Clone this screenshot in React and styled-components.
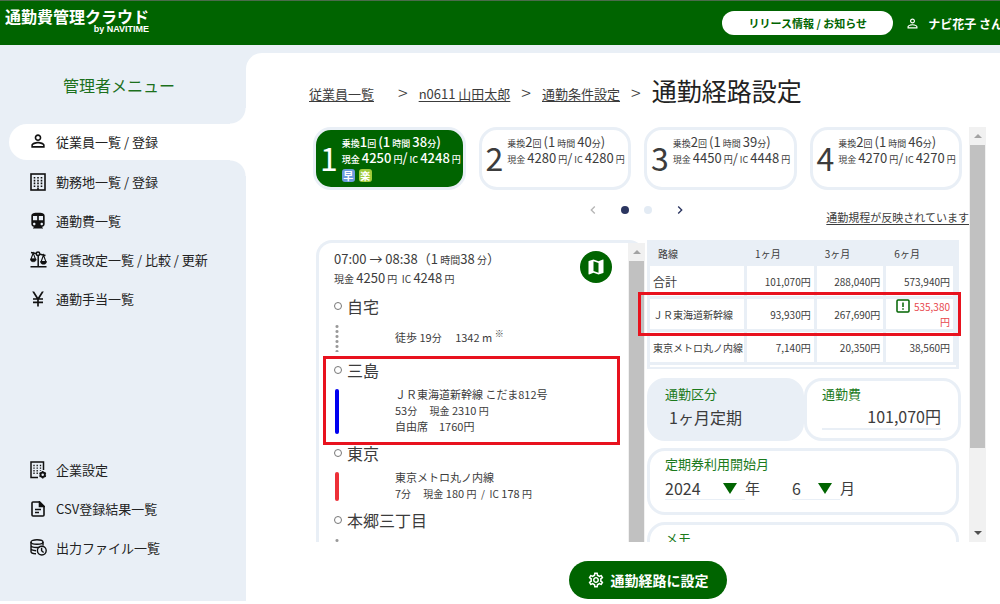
import styled, { createGlobalStyle, css } from 'styled-components';
import {
	MdPersonOutline,
	MdDirectionsTransit,
	MdCurrencyYen,
	MdMap,
	MdOutlineSettings,
	MdChevronLeft,
	MdChevronRight,
} from 'react-icons/md';

const routes = [
	{ no: 1, transfer: 1, minute: 38, cash: 4250, ic: 4248, tags: ['早', '楽'] },
	{ no: 2, transfer: 2, minute: 40, cash: 4280, ic: 4280, tags: [] },
	{ no: 3, transfer: 2, minute: 39, cash: 4450, ic: 4448, tags: [] },
	{ no: 4, transfer: 2, minute: 46, cash: 4270, ic: 4270, tags: [] },
];

function BuildingIcon() {
	return (
		<svg width="16" height="18" viewBox="0 0 16 18" fill="none" stroke="#111">
			<rect x="1" y="1" width="14" height="16" strokeWidth="1.6" />
			<path d="M4.5 4v10M8 4v10M11.5 4v10" strokeWidth="1.6" strokeDasharray="1.6 1.2" />
			<path d="M8 14.5V17" strokeWidth="1.6" />
		</svg>
	);
}

// 左の皿が上がった天びん
function ScaleIcon() {
	return (
		<svg width="17" height="17" viewBox="0 0 17 17" fill="none" stroke="#111" strokeWidth="1.5">
			<path d="M1 1.600l5 1M10 3.200l5.500 1.200M8.200 4.500V15.500M.5 15.800h16" />
			<circle cx="8" cy="2.800" r="1.700" />
			<path d="M3.200 2L1 8h4.400L3.200 2zM13.500 4l-2.300 6.500h4.600L13.500 4z" strokeWidth="1.100" />
			<path d="M.4 8h5.800c0 2-1.300 2.800-2.900 2.800S.4 10 .4 8zM10.400 10.500h6.200c0 2-1.500 2.800-3.100 2.800s-3.100-.8-3.100-2.800z" fill="#111" strokeWidth="0.500" />
		</svg>
	);
}

function CompanyIcon() {
	return (
		<svg width="17" height="18" viewBox="0 0 17 18" fill="none" stroke="#111">
			<path d="M8 16.500H1V1h12.500v8" strokeWidth="1.500" />
			<path d="M4 3.800v10M7.200 3.800v10M10.500 3.800v6" strokeWidth="1.300" strokeDasharray="1.400 1.200" />
			<circle cx="12.700" cy="13.700" r="2.200" strokeWidth="1.900" />
			<path d="M12.700 10v1.400M12.700 16v1.400M9.500 11.900l1.200.7M14.700 14.800l1.200.7M9.500 15.500l1.200-.7M14.700 12.600l1.200-.7" strokeWidth="1.500" />
		</svg>
	);
}

function FileIcon() {
	return (
		<svg width="14" height="16" viewBox="0 0 14 16" fill="none" stroke="#111" strokeWidth="1.600">
			<path d="M2 1h6.500L13 5.500V14a1 1 0 0 1-1 1H2a1 1 0 0 1-1-1V2a1 1 0 0 1 1-1z" />
			<path d="M8.500 1v4.500H13z" fill="#111" />
			<path d="M4 8.500h6M4 11.500h4" strokeWidth="1.300" />
		</svg>
	);
}

function DataIcon() {
	return (
		<svg width="17" height="17" viewBox="0 0 17 17" fill="none" stroke="#111" strokeWidth="1.400">
			<ellipse cx="7" cy="3" rx="6" ry="2.200" />
			<path d="M1 3v9.500c0 1.200 2.200 2.200 5 2.300M13 3v3.500M1 6.300c0 1.200 2.700 2.200 6 2.200 1.500 0 2-.1 2.600-.3M1 9.600c0 1.200 2 2 5 2.200" />
			<circle cx="11.800" cy="11.600" r="4.400" />
			<path d="M11.600 8.800v3l2 1.800" />
		</svg>
	);
}

function WarningIcon() {
	return (
		<svg width="14" height="14" viewBox="0 0 14 14" fill="none" stroke="#006400">
			<rect x="1" y="1" width="12" height="12" rx="1" strokeWidth="1.500" />
			<path d="M7 3.500v4.500M7 9.200v1.500" strokeWidth="1.500" />
		</svg>
	);
}

const mainMenu = [
	{ label: '従業員一覧 / 登録', icon: <MdPersonOutline size={20} />, active: true },
	{ label: '勤務地一覧 / 登録', icon: <BuildingIcon /> },
	{ label: '通勤費一覧', icon: <MdDirectionsTransit size={20} /> },
	{ label: '運賃改定一覧 / 比較 / 更新', icon: <ScaleIcon /> },
	{ label: '通勤手当一覧', icon: <MdCurrencyYen size={20} /> },
];

const subMenu = [
	{ label: '企業設定', icon: <CompanyIcon /> },
	{ label: 'CSV登録結果一覧', icon: <FileIcon /> },
	{ label: '出力ファイル一覧', icon: <DataIcon /> },
];

function Menu({ items }) {
	return (
		<MenuList>
			{items.map((item) => (
				<MenuItem key={item.label} $active={item.active}>
					<MenuLink href="#">
						<MenuIcon>{item.icon}</MenuIcon>
						{item.label}
					</MenuLink>
				</MenuItem>
			))}
		</MenuList>
	);
}

function RouteCard({ route, selected }) {
	return (
		<RouteButton type="button" $selected={selected}>
			<RouteNumber>{route.no}</RouteNumber>
			<RouteText>
				<RouteLine>
					乗換<Num>{route.transfer}</Num>回 <Num>(1</Num> 時間 <Num>{route.minute}</Num>分<Num>)</Num>
				</RouteLine>
				<RouteLine>
					現金 <Num>{route.cash}</Num> 円<Num>/</Num> IC <Num>{route.ic}</Num> 円
				</RouteLine>
				<TagRow>
					{route.tags.map((tag) => (
						<Tag key={tag} $easy={tag === '楽'}>
							{tag}
						</Tag>
					))}
				</TagRow>
			</RouteText>
		</RouteButton>
	);
}

function Scrollbar({ full }) {
	return (
		<ScrollTrack>
			<ScrollArrow />
			<ScrollThumb $full={full} />
			{full ? null : <ScrollArrow $down />}
		</ScrollTrack>
	);
}

function Itinerary() {
	return (
		<RoutePanel>
			<RouteBody>
				<RouteHead>
					<div>
						<HeadLine>
							<Num>07:00 → 08:38（1</Num> 時間<Num>38</Num> 分<Num>）</Num>
						</HeadLine>
						<HeadLine>
							現金 <Num>4250</Num> 円&nbsp; IC <Num>4248</Num> 円
						</HeadLine>
					</div>
					<MapButton type="button" aria-label="地図">
						<MdMap size={20} />
					</MapButton>
				</RouteHead>

				<Leg>
					<Station>自宅</Station>
					<Segment $height={40}>
						<WalkBar />
						<div>
							徒歩 19<Small>分</Small>　 1342 m <sup>※</sup>
						</div>
					</Segment>
				</Leg>
				<Leg $marked>
					<Station>三島</Station>
					<Segment $height={59}>
						<LineBar $color="#0000f0" />
						<div>
							<div>ＪＲ東海道新幹線 こだま812号</div>
							<div>
								53<Small>分　 現金</Small> 2310 <Small>円</Small>
							</div>
							<div>自由席　1760円</div>
						</div>
					</Segment>
				</Leg>
				<Leg>
					<Station>東京</Station>
					<Segment $height={43}>
						<LineBar $color="#ed3038" />
						<div>
							<div>東京メトロ丸ノ内線</div>
							<div>
								7<Small>分　 現金</Small> 180 <Small>円 &nbsp;/ &nbsp;IC</Small> 178 <Small>円</Small>
							</div>
						</div>
					</Segment>
				</Leg>
				<Leg>
					<Station>本郷三丁目</Station>
					<Segment $height={40}>
						<WalkBar />
					</Segment>
				</Leg>
			</RouteBody>
			<Scrollbar full />
		</RoutePanel>
	);
}

function FareTable() {
	return (
		<TableBox>
			<Table>
				<thead>
					<tr>
						<HeadCell $first>路線</HeadCell>
						<HeadCell>1ヶ月</HeadCell>
						<HeadCell>3ヶ月</HeadCell>
						<HeadCell>6ヶ月</HeadCell>
					</tr>
				</thead>
				<tbody>
					<tr>
						<NameCell $total>合計</NameCell>
						<Cell>101,070円</Cell>
						<Cell>288,040円</Cell>
						<Cell>573,940円</Cell>
					</tr>
					<MarkedRow>
						<NameCell>
							ＪＲ東海道新幹線
							<RowMark />
						</NameCell>
						<Cell>93,930円</Cell>
						<Cell>267,690円</Cell>
						<Cell>
							<Alert>
								<WarningIcon />
								<span>
									535,380
									<br />円
								</span>
							</Alert>
						</Cell>
					</MarkedRow>
					<tr>
						<NameCell>東京メトロ丸ノ内線</NameCell>
						<Cell>7,140円</Cell>
						<Cell>20,350円</Cell>
						<Cell>38,560円</Cell>
					</tr>
				</tbody>
			</Table>
			<TableEnd />
		</TableBox>
	);
}

export default function App() {
	return (
		<Page>
			<GlobalStyle />
			<Header>
				<Logo href="#">
					通勤費管理クラウド
					<LogoSub>by NAVITIME</LogoSub>
				</Logo>
				<HeaderRight>
					<NewsButton type="button">リリース情報 / お知らせ</NewsButton>
					<User>
						<MdPersonOutline size={15} />
						ナビ花子 さん
					</User>
				</HeaderRight>
			</Header>

			<Body>
				<Sidebar>
					<SideTitle>管理者メニュー</SideTitle>
					<Menu items={mainMenu} />
					<Menu items={subMenu} />
				</Sidebar>

				<Main>
					<Breadcrumb>
						<Crumb href="#" $wide>
							従業員一覧
						</Crumb>
						<Arrow>&gt;</Arrow>
						<Crumb href="#">n0611 山田太郎</Crumb>
						<Arrow>&gt;</Arrow>
						<Crumb href="#">通勤条件設定</Crumb>
						<Arrow>&gt;</Arrow>
						<Title>通勤経路設定</Title>
					</Breadcrumb>

					<ScrollArea>
						<ScrollContent>
							<RouteList>
								{routes.map((route) => (
									<RouteCard key={route.no} route={route} selected={route.no === 1} />
								))}
							</RouteList>
							<PagerRow>
								<Pager>
									<PagerButton type="button" aria-label="前へ" $disabled>
										<MdChevronLeft size={16} />
									</PagerButton>
									<Dots>
										<Dot $on />
										<Dot />
									</Dots>
									<PagerButton type="button" aria-label="次へ">
										<MdChevronRight size={16} />
									</PagerButton>
								</Pager>
								<RuleLink href="#">通勤規程が反映されています</RuleLink>
							</PagerRow>

							<Columns>
								<Itinerary />
								<Side>
									<FareTable />
									<Pair>
										<Box $filled>
											<Label>通勤区分</Label>
											<Value>1ヶ月定期</Value>
										</Box>
										<Box>
											<Label as="label" htmlFor="fare">
												通勤費
											</Label>
											<FareInput id="fare" defaultValue="101,070円" />
										</Box>
									</Pair>
									<Box $wide>
										<Label>定期券利用開始月</Label>
										<DateRow>
											<SelectWrap $width={80}>
												<Select id="year" defaultValue="2024">
													<option>2024</option>
													<option>2025</option>
												</Select>
											</SelectWrap>
											<DateUnit htmlFor="year" $year>
												年
											</DateUnit>
											<SelectWrap $width={48}>
												<Select id="month" defaultValue="6">
													<option>6</option>
													<option>7</option>
												</Select>
											</SelectWrap>
											<DateUnit htmlFor="month">月</DateUnit>
										</DateRow>
									</Box>
									<Box $wide>
										<Label as="label" htmlFor="memo">
											メモ
										</Label>
										<Memo id="memo" />
									</Box>
								</Side>
							</Columns>
						</ScrollContent>
						<Scrollbar />
					</ScrollArea>

					<Footer>
						<SubmitButton type="button">
							<MdOutlineSettings size={18} />
							通勤経路に設定
						</SubmitButton>
					</Footer>
				</Main>
			</Body>
		</Page>
	);
}

const GlobalStyle = createGlobalStyle`
	:root {
		--green: #006400;
		--pale: #e9eff6;
		--text: #3c3c3c;
	}
	* {
		box-sizing: border-box;
	}
	body {
		margin: 0;
		color: #222;
		font-family: 'Noto Sans CJK JP', sans-serif;
		font-size: 13px;
		overflow: hidden;
	}
	button, input, select, textarea {
		font-family: inherit;
		color: inherit;
	}
	a {
		color: inherit;
	}
	svg {
		flex-shrink: 0;
	}
`;

const Page = styled.div`
	display: flex;
	flex-direction: column;
	height: 100vh;
	padding-bottom: 3px;
	background-color: white;
`;

const Header = styled.header`
	display: flex;
	justify-content: space-between;
	height: 45px;
	flex-shrink: 0;
	padding-left: 5px;
	border-top: 1px solid #4b6b4b;
	background-color: var(--green);
	color: white;
	overflow: hidden;
`;

const Logo = styled.a`
	display: flex;
	flex-direction: column;
	padding-top: 5px;
	font-size: 16px;
	font-weight: 700;
	line-height: 20px;
	text-decoration: none;
`;

const LogoSub = styled.span`
	align-self: flex-end;
	font-family: 'Liberation Sans', sans-serif;
	font-size: 9px;
	line-height: 6px;
`;

const HeaderRight = styled.div`
	display: flex;
	align-items: center;
	gap: 12px;
	margin-right: -3px;
`;

const NewsButton = styled.button`
	width: 171px;
	height: 24px;
	padding: 0;
	border: none;
	border-radius: 12px;
	background-color: white;
	color: var(--green);
	font-size: 11px;
	font-weight: 700;
`;

const User = styled.div`
	display: flex;
	align-items: center;
	gap: 8px;
	font-size: 12px;
	font-weight: 700;
	white-space: nowrap;
`;

const Body = styled.div`
	display: flex;
	flex: 1;
	min-height: 0;
	background-color: var(--pale);
`;

const Sidebar = styled.nav`
	display: flex;
	flex-direction: column;
	justify-content: space-between;
	width: 246px;
	flex-shrink: 0;
	padding-bottom: 33px;
`;

const SideTitle = styled.h2`
	margin: 28px 0 27px;
	padding-right: 8px;
	color: #1c701c;
	font-size: 16px;
	font-weight: 400;
	line-height: 24px;
	text-align: center;
`;

const MenuList = styled.ul`
	margin: 0;
	padding: 0 0 0 9px;
	list-style: none;

	&:last-child {
		margin-top: auto;
	}
`;

const MenuItem = styled.li`
	display: flex;
	height: 39px;
	${(props) =>
		props.$active
			? css`
					position: relative;
					height: 36px;
					margin-bottom: 3px;
					border-radius: 18px 0 0 18px;
					background-color: white;
					&::before,
					&::after {
						content: '';
						position: absolute;
						right: 0;
						width: 16px;
						height: 16px;
					}
					&::before {
						bottom: 100%;
						background: radial-gradient(circle at 0 0, transparent 15px, white 16px);
					}
					&::after {
						top: 100%;
						background: radial-gradient(circle at 0 100%, transparent 15px, white 16px);
					}
			  `
			: null}
`;

const MenuLink = styled.a`
	display: flex;
	align-items: center;
	flex: 1;
	gap: 8px;
	padding: 0 0 2px 19px;
	text-decoration: none;
`;

const MenuIcon = styled.span`
	display: flex;
	justify-content: center;
	width: 20px;
	color: #111;
`;

const Main = styled.main`
	display: flex;
	flex-direction: column;
	flex: 1;
	min-width: 0;
	margin-top: 8px;
	padding: 0 14px 0 63px;
	border-top-left-radius: 16px;
	background-color: white;
`;

const Breadcrumb = styled.nav`
	display: flex;
	align-items: center;
	gap: 11px;
	height: 74px;
	flex-shrink: 0;
`;

const Crumb = styled.a`
	margin-right: ${(props) => (props.$wide ? '13px' : '0')};
	padding-top: 6px;
	color: var(--text);
	text-underline-offset: 2px;
	white-space: nowrap;
`;

const Arrow = styled.span`
	padding-top: 4px;
	color: var(--text);
	font-size: 18px;
	font-weight: 300;
`;

const Title = styled.h1`
	margin: 0;
	font-size: 25px;
	font-weight: 400;
	line-height: 36px;
	white-space: nowrap;
`;

const ScrollArea = styled.div`
	display: flex;
	flex: 1;
	min-height: 0;
	overflow: hidden;
`;

const ScrollContent = styled.div`
	flex: 1;
	min-width: 0;
	padding-left: 4px;
`;

const ScrollTrack = styled.div`
	display: flex;
	flex-direction: column;
	width: 17px;
	flex-shrink: 0;
	background-color: #f1f1f1;
`;

const ScrollArrow = styled.div`
	display: flex;
	justify-content: center;
	align-items: center;
	height: 18px;
	flex-shrink: 0;
	margin-top: ${(props) => (props.$down ? 'auto' : '0')};

	&::before {
		content: '';
		border: 4px solid transparent;
		${(props) =>
			props.$down
				? css`
						border-top-color: #505050;
						border-bottom: none;
				  `
				: css`
						border-bottom-color: #a3a3a3;
						border-top: none;
				  `}
	}
`;

const ScrollThumb = styled.div`
	height: ${(props) => (props.$full ? 'auto' : '73%')};
	flex: ${(props) => (props.$full ? '1' : 'none')};
	margin: 0 1px;
	background-color: #c1c1c1;
`;

const RouteList = styled.div`
	display: grid;
	grid-template-columns: repeat(4, minmax(0, 1fr));
	gap: 13px;
	padding-right: 7px;
`;

const RouteButton = styled.button`
	display: flex;
	gap: 4px;
	height: 63px;
	padding: 4px 0 0 4px;
	border: 3px solid var(--pale);
	border-radius: 18px;
	background-color: ${(props) => (props.$selected ? 'var(--green)' : 'white')};
	color: ${(props) => (props.$selected ? 'white' : 'var(--text)')};
	font-weight: ${(props) => (props.$selected ? '500' : '400')};
	text-align: left;
	white-space: nowrap;
`;

const RouteNumber = styled.span`
	padding-top: 7px;
	font-size: 32px;
	font-weight: 400;
	line-height: 32px;
`;

const RouteText = styled.span`
	display: flex;
	flex-direction: column;
	font-size: 9px;
`;

const RouteLine = styled.span`
	height: 16px;
	line-height: 16px;
`;

const Num = styled.span`
	font-size: 13px;
`;

const TagRow = styled.span`
	display: flex;
	gap: 4px;
	padding-top: 3px;
`;

const Tag = styled.span`
	width: 13px;
	height: 13px;
	border-radius: 3px;
	background-color: ${(props) => (props.$easy ? '#9fcb3b' : '#6c9bdd')};
	font-size: 10px;
	font-weight: 700;
	line-height: 13px;
	text-align: center;
`;

const PagerRow = styled.div`
	display: grid;
	grid-template-columns: 1fr auto 1fr;
	height: 50px;
`;

const Pager = styled.div`
	display: flex;
	grid-column: 2;
	align-items: center;
	gap: 20px;
	height: 40px;
	margin-right: 10px;
`;

const PagerButton = styled.button`
	display: flex;
	padding: 0;
	border: none;
	background: none;
	color: ${(props) => (props.$disabled ? '#b5b5b5' : '#2b3560')};
`;

const Dots = styled.div`
	display: flex;
	gap: 15px;
`;

const Dot = styled.span`
	width: 8px;
	height: 8px;
	border-radius: 50%;
	background-color: ${(props) => (props.$on ? '#2b3560' : '#e3ebf4')};
`;

const RuleLink = styled.a`
	justify-self: end;
	margin-top: 19px;
	color: var(--text);
	font-size: 11px;
	line-height: 16px;
	text-underline-offset: 2px;
`;

const Columns = styled.div`
	display: grid;
	grid-template-columns: minmax(0, 329fr) minmax(0, 314fr);
	gap: 2px;
	padding: 0 8px 0 3px;
`;

const RoutePanel = styled.section`
	display: flex;
	border: 3px solid var(--pale);
	border-right: none;
	border-radius: 16px 16px 0 0;
	color: var(--text);
`;

const RouteBody = styled.div`
	flex: 1;
	min-width: 0;
	padding: 6px 8px 0 4px;
	font-size: 11px;
`;

const RouteHead = styled.div`
	display: flex;
	justify-content: space-between;
	align-items: flex-start;
	height: 45px;
	padding: 0 8px 0 11px;
	font-size: 10px;
	white-space: nowrap;
`;

const HeadLine = styled.div`
	height: 19px;
	line-height: 19px;
`;

const MapButton = styled.button`
	display: flex;
	justify-content: center;
	align-items: center;
	width: 32px;
	height: 32px;
	margin-top: 2px;
	padding: 0;
	border: none;
	border-radius: 50%;
	background-color: var(--green);
	color: white;
`;

const Leg = styled.div`
	position: relative;
	padding-left: 11px;
	${(props) =>
		props.$marked
			? css`
					&::after {
						content: '';
						position: absolute;
						inset: -2px 0 -4px;
						border: 3px solid #e8121e;
					}
			  `
			: null}
`;

const Station = styled.div`
	display: flex;
	align-items: center;
	gap: 5px;
	height: 24px;
	padding-bottom: 1px;
	font-size: 16px;
	line-height: 22px;

	&::before {
		content: '';
		box-sizing: border-box;
		width: 8px;
		height: 8px;
		border: 1px solid #777;
		border-radius: 50%;
	}
`;

const Segment = styled.div`
	display: flex;
	align-items: center;
	gap: 56px;
	height: ${(props) => props.$height}px;
	padding: 0 0 3px 1px;
	line-height: 16px;

	sup {
		font-size: 9px;
		line-height: 0;
	}
`;

const Small = styled.span`
	font-size: 10px;
	line-height: 1;
`;

const LineBar = styled.span`
	align-self: stretch;
	width: 4px;
	margin: 7px 0 4px;
	border-radius: 2px;
	background-color: ${(props) => props.$color};
`;

const WalkBar = styled.span`
	align-self: stretch;
	width: 4px;
	margin: 6px 0 3px;
	background: radial-gradient(circle, #999 1px, transparent 2px) 0 0 / 4px 5px repeat-y;
`;

const Side = styled.div`
	display: flex;
	flex-direction: column;
	gap: 7px;
	color: var(--text);
`;

const TableBox = styled.div`
	margin: 0 2px 2px 0;
	padding: 0 3px 2px 0;
	background-color: var(--pale);
`;

const Table = styled.table`
	width: 100%;
	border-collapse: separate;
	border-spacing: 3px;
	table-layout: fixed;
	font-size: 10px;
	line-height: 15px;
`;

const TableEnd = styled.div`
	height: 2px;
	margin-left: 3px;
	background-color: white;
`;

const HeadCell = styled.th`
	width: ${(props) => (props.$first ? '32%' : 'auto')};
	height: 20px;
	padding: 0 8px;
	font-weight: 400;
	text-align: left;
`;

const MarkedRow = styled.tr`
	position: relative;
`;

const RowMark = styled.span`
	position: absolute;
	z-index: 1;
	inset: -7px -8px -7px -12px;
	border: 3px solid #e8121e;
`;

const NameCell = styled.td`
	height: 30px;
	padding: 0 0 0 3px;
	background-color: white;
	font-size: ${(props) => (props.$total ? '12px' : '10px')};
	white-space: nowrap;
`;

const Cell = styled.td`
	height: 30px;
	padding: 0 3px 0 0;
	background-color: white;
	text-align: right;
`;

const Alert = styled.div`
	display: flex;
	justify-content: flex-end;
	gap: 4px;
	color: #e8474c;
`;

const Pair = styled.div`
	display: grid;
	grid-template-columns: 1fr 1fr;
`;

const Box = styled.div`
	min-height: ${(props) => (props.$wide ? '67px' : '63px')};
	margin-right: ${(props) => (props.$wide ? '2px' : '0')};
	padding: 4px 17px 0 15px;
	border: 3px solid var(--pale);
	border-radius: 18px;
	background-color: ${(props) => (props.$filled ? 'var(--pale)' : 'white')};
`;

const Label = styled.div`
	display: block;
	color: #1c7a1c;
	font-size: 13px;
	line-height: 18px;
`;

const Value = styled.div`
	padding: 2px 0 0 4px;
	font-size: 16px;
	line-height: 24px;
`;

const FareInput = styled.input`
	display: block;
	width: 100%;
	height: 27px;
	padding: 1px 0 0;
	border: none;
	border-bottom: 2px solid var(--pale);
	font-size: 16px;
	text-align: right;
`;

const DateRow = styled.div`
	display: flex;
	align-items: center;
	margin-top: 3px;
`;

const SelectWrap = styled.span`
	position: relative;
	width: ${(props) => props.$width}px;

	&::after {
		content: '';
		position: absolute;
		top: 7px;
		right: 8px;
		border: 7px solid transparent;
		border-top: 11px solid var(--green);
		border-bottom: none;
		pointer-events: none;
	}
`;

const Select = styled.select`
	display: block;
	width: 100%;
	height: 24px;
	padding: 0;
	border: none;
	border-bottom: 1px solid var(--pale);
	background: none;
	font-size: 16px;
	appearance: none;
`;

const DateUnit = styled.label`
	margin-right: ${(props) => (props.$year ? '32px' : '0')};
	font-size: 15px;
	line-height: 24px;
`;

const Memo = styled.textarea`
	display: block;
	width: 100%;
	height: 24px;
	border: none;
	resize: none;
`;

const Footer = styled.footer`
	display: flex;
	justify-content: center;
	height: 59px;
	flex-shrink: 0;
	padding: 19px 0 2px;
`;

const SubmitButton = styled.button`
	display: flex;
	justify-content: center;
	align-items: center;
	gap: 6px;
	width: 158px;
	border: none;
	border-radius: 19px;
	background-color: var(--green);
	color: white;
	font-size: 14px;
	font-weight: 700;
	padding: 0;
`;
